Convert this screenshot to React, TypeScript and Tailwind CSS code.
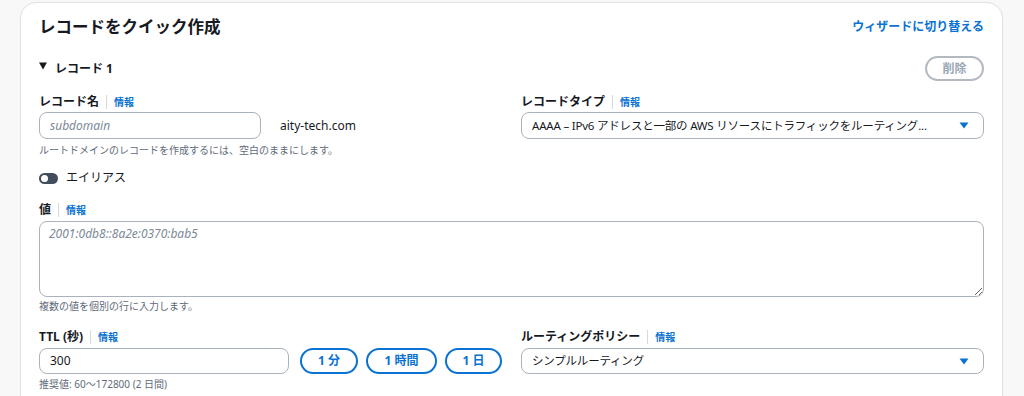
const font = { fontFamily: '"Noto Sans", "Noto Sans CJK JP", sans-serif' };

function FieldLabel({ text }: { text: string }) {
  return (
    <div className="flex h-[20px] items-center">
      <span className="text-[12px] font-bold text-[#16191f]">{text}</span>
      <span className="mx-[7px] h-[14px] w-px bg-[#d5dbdb]" />
      <span className="text-[10px] font-bold text-[#0972d3]">情報</span>
    </div>
  );
}

function Caret() {
  return (
    <svg width="10" height="7" viewBox="0 0 10 7" className="shrink-0">
      <path d="M0.5 0.5h9L5 6.5z" fill="#0972d3" />
    </svg>
  );
}

function SelectBox({ value, height }: { value: string; height: string }) {
  return (
    <div
      className={`flex ${height} items-center justify-between gap-3 rounded-lg border border-[#aab3bd] bg-white pl-[10px] pr-[14px]`}
    >
      <span className="whitespace-nowrap text-[11.5px] tracking-[-0.2px] text-[#16191f]">{value}</span>
      <Caret />
    </div>
  );
}

const quickTtl = [
  { label: "1 分", w: "w-[58px]" },
  { label: "1 時間", w: "w-[71px]" },
  { label: "1 日", w: "w-[57px]" },
];

export default function App() {
  return (
    <div className="h-[396px] overflow-hidden bg-[#f8f8f8] px-[20px] pt-[2px]" style={font}>
      <div className="h-[430px] w-[983px] rounded-2xl border border-[#e1e1e1] bg-white px-[18px] pt-[12px] shadow-[0_1px_2px_rgba(0,0,0,0.04)]">
        <div className="flex h-[24px] items-center justify-between">
          <h2 className="text-[16.5px] font-bold text-[#16191f]">レコードをクイック作成</h2>
          <a className="text-[12px] font-bold text-[#0972d3]">ウィザードに切り替える</a>
        </div>

        <div className="mt-[17px] flex h-[25px] items-center justify-between">
          <div className="flex items-center gap-[8px]">
            <svg width="8" height="8" viewBox="0 0 8 8" className="-mt-[5px]">
              <path d="M0 0.5h8L4 7.5z" fill="#16191f" />
            </svg>
            <span className="text-[12px] font-bold text-[#16191f]">レコード 1</span>
          </div>
          <button className="flex h-[25px] w-[59px] items-center justify-center rounded-full border-2 border-[#b4b9c0] text-[12px] font-bold text-[#9ba7b6]">
            削除
          </button>
        </div>

        <div className="mt-[11px] grid grid-cols-2 gap-x-[19px]">
          <div>
            <FieldLabel text="レコード名" />
            <div className="flex items-center gap-[19px]">
              <div className="flex h-[27px] w-[222px] items-center rounded-lg border border-[#aab3bd] px-[10px]">
                <span className="text-[12px] italic text-[#7d8998]">subdomain</span>
              </div>
              <span className="text-[12px] text-[#16191f]">aity-tech.com</span>
            </div>
            <p className="mt-[3px] text-[10px] leading-[16px] text-[#5f6b7a]">
              ルートドメインのレコードを作成するには、空白のままにします。
            </p>
          </div>
          <div>
            <FieldLabel text="レコードタイプ" />
            <SelectBox
              height="h-[27px]"
              value="AAAA – IPv6 アドレスと一部の AWS リソースにトラフィックをルーティング..."
            />
          </div>
        </div>

        <div className="mt-[10px] flex h-[20px] items-center gap-[8px]">
          <span className="relative h-[11px] w-[19px] rounded-full bg-[#414d5c]">
            <span className="absolute left-[2px] top-[2px] h-[7px] w-[7px] rounded-full bg-white" />
          </span>
          <span className="text-[12px] text-[#16191f]">エイリアス</span>
        </div>

        <div className="mt-[12px]">
          <FieldLabel text="値" />
          <textarea
            readOnly
            placeholder="2001:0db8::8a2e:0370:bab5"
            className="mt-[1px] block h-[76px] w-full rounded-lg border border-[#aab3bd] px-[9px] pt-[4px] text-[12px] leading-[16px] outline-none placeholder:italic placeholder:text-[#7d8998]"
          />
          <p className="mt-[1px] text-[10px] leading-[16px] text-[#5f6b7a]">複数の値を個別の行に入力します。</p>
        </div>

        <div className="mt-[13px] grid grid-cols-2 gap-x-[19px]">
          <div>
            <FieldLabel text="TTL (秒)" />
            <div className="mt-[1px] flex items-center">
              <div className="flex h-[26px] w-[250px] items-center rounded-lg border border-[#aab3bd] px-[10px]">
                <span className="text-[12px] text-[#16191f]">300</span>
              </div>
              <div className="ml-[11px] flex gap-[8px]">
                {quickTtl.map((b) => (
                  <button
                    key={b.label}
                    className={`flex h-[26px] ${b.w} items-center justify-center rounded-full border-2 border-[#0972d3] text-[12px] font-bold text-[#0972d3]`}
                  >
                    {b.label}
                  </button>
                ))}
              </div>
            </div>
            <p className="mt-[2px] text-[10px] leading-[16px] text-[#5f6b7a]">推奨値: 60〜172800 (2 日間)</p>
          </div>
          <div>
            <FieldLabel text="ルーティングポリシー" />
            <div className="mt-[1px]">
              <SelectBox height="h-[26px]" value="シンプルルーティング" />
            </div>
          </div>
        </div>
      </div>
    </div>
  );
}
